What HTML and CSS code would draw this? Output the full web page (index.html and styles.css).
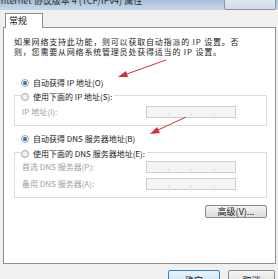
FILE: index.html
```html
<!DOCTYPE html>
<html lang="zh-CN">
<head>
    <meta charset="UTF-8">
    <title>Internet 协议版本 4 (TCP/IPv4) 属性</title>
    <link rel="stylesheet" href="styles.css">
</head>
<body>
    <div id="dialog">
        <header class="titlebar">
            <span class="title">Internet 协议版本 4 (TCP/IPv4) 属性</span>
            <span class="close-btn"></span>
        </header>

        <nav class="tabs">
            <span class="tab">常规</span>
        </nav>

        <section class="panel">
            <p class="intro">如果网络支持此功能，则可以获取自动指派的 IP 设置。否<br>则，您需要从网络系统管理员处获得适当的 IP 设置。</p>

            <div class="radio first"><span class="dot checked"></span>自动获得 IP 地址(O)</div>
            <fieldset class="group ip-group">
                <legend class="radio"><span class="dot"></span>使用下面的 IP 地址(S):</legend>
                <div class="row">
                    <span class="label">IP 地址(I):</span>
                    <span class="ipbox"><i>.</i><i>.</i><i>.</i></span>
                </div>
            </fieldset>

            <div class="radio dns-auto"><span class="dot checked"></span>自动获得 DNS 服务器地址(B)</div>
            <fieldset class="group dns-group">
                <legend class="radio"><span class="dot"></span>使用下面的 DNS 服务器地址(E):</legend>
                <div class="row">
                    <span class="label">首选 DNS 服务器(P):</span>
                    <span class="ipbox"><i>.</i><i>.</i><i>.</i></span>
                </div>
                <div class="row">
                    <span class="label">备用 DNS 服务器(A):</span>
                    <span class="ipbox"><i>.</i><i>.</i><i>.</i></span>
                </div>
            </fieldset>

            <div class="advanced-row">
                <button class="btn advanced">高级(V)...</button>
            </div>
        </section>

        <footer class="buttons">
            <button class="btn ok">确定</button>
            <button class="btn cancel">取消</button>
        </footer>
    </div>

    <!-- red annotation arrows drawn over the dialog -->
    <svg class="arrows" width="278" height="279" viewBox="0 0 278 279">
        <g stroke="#d0303a" stroke-width="1" fill="#d0303a">
            <line x1="166" y1="60" x2="124" y2="75"/>
            <polygon points="118,77 126,71 128,77" stroke="none"/>
            <line x1="186" y1="117" x2="156" y2="131"/>
            <polygon points="150,134 157,127 160,133" stroke="none"/>
        </g>
    </svg>
</body>
</html>
```

FILE: styles.css
```css
body {
    margin: 0;
    width: 278px;
    height: 279px;
    overflow: hidden;
    background: #f0f0f0;
    font-family: "Noto Sans CJK SC", "DejaVu Sans", sans-serif;
    font-size: 9px;
    color: #1a1a1a;
}

#dialog {
    width: 278px;
    height: 279px;
}

.titlebar {
    height: 10px;
    display: flex;
    justify-content: space-between;
    background: linear-gradient(to bottom, #a9bfd8, #c8d8ea);
    overflow: hidden;
}

.title {
    margin-top: -5px;
    margin-left: -2px;
    line-height: 12px;
    color: #2a2f38;
}

.close-btn {
    width: 50px;
    height: 11px;
    margin-top: -3px;
    margin-right: 2px;
    border: 1px solid #8a97a8;
    border-radius: 2px;
    background: linear-gradient(to bottom, #e6ebf2, #d0d9e4);
}

.tabs {
    height: 17px;
    padding-left: 5px;
    display: flex;
    align-items: flex-end;
}

.tab {
    width: 33px;
    height: 14px;
    margin-bottom: -1px;
    padding-left: 3px;
    border: 1px solid #8e8f8f;
    border-bottom: none;
    background: #fff;
    line-height: 14px;
    position: relative;
    z-index: 1;
}

.panel {
    margin: 0 2px 0 3px;
    height: 235px;
    border: 1px solid #8e8f8f;
    background: #fff;
    padding: 0 8px 0 10px;
}

.intro {
    margin: 9px 0 0;
    font-size: 8px;
    line-height: 10px;
    letter-spacing: 0.8px;
}

.radio {
    display: flex;
    align-items: center;
    font-size: 8px;
    line-height: 10px;
    white-space: nowrap;
}

.radio.first {
    margin: 21px 0 0 7px;
}

.dot {
    width: 6px;
    height: 6px;
    margin-right: 4px;
    border: 1px solid #a4a9b0;
    border-radius: 50%;
    background: #eef0f2;
    box-sizing: content-box;
    position: relative;
}

.dot.checked::after {
    content: "";
    position: absolute;
    left: 1px;
    top: 1px;
    width: 4px;
    height: 4px;
    border-radius: 50%;
    background: #3c6fb0;
}

.group {
    margin: 0;
    padding: 1px 8px 5px 7px;
    border: 1px solid #dcdcdc;
    min-width: 0;
}

.group legend {
    padding: 4px 2px 0 0;
    margin-left: -1px;
    background: #fff;
}

.dns-auto {
    margin: 8px 0 0 7px;
}

.dns-group {
    margin-top: 1px;
}

.dns-group .row:first-of-type {
    margin-top: -2px;
}

.row {
    height: 17px;
    display: flex;
    align-items: center;
    justify-content: space-between;
    font-size: 8px;
    color: #a0a0a0;
}

.ipbox {
    width: 88px;
    height: 10px;
    margin-right: 22px;
    border: 1px solid #cfcfcf;
    background: #f4f4f4;
    display: flex;
    justify-content: space-evenly;
    align-items: center;
    color: #b8b8b8;
    line-height: 8px;
}

.ipbox i {
    font-style: normal;
}

.advanced-row {
    display: flex;
    justify-content: flex-end;
    margin-top: 7px;
}

.btn {
    font-family: inherit;
    font-size: 9px;
    color: #1a1a1a;
    padding: 0;
    border: 1px solid #8a8a8a;
    border-radius: 2px;
    background: linear-gradient(to bottom, #f4f4f4, #dcdcdc);
}

.advanced {
    width: 62px;
    height: 13px;
    line-height: 11px;
}

.buttons {
    display: flex;
    justify-content: flex-end;
    gap: 8px;
    padding: 6px 3px 0 0;
}

.ok, .cancel {
    height: 17px;
    line-height: 15px;
    padding-top: 2px;
}

.ok {
    width: 52px;
    border-color: #3c7fb1;
    background: linear-gradient(to bottom, #e8f4fc, #c4e0f6);
}

.cancel {
    width: 47px;
}

.arrows {
    position: absolute;
    left: 0;
    top: 0;
    pointer-events: none;
}
```
